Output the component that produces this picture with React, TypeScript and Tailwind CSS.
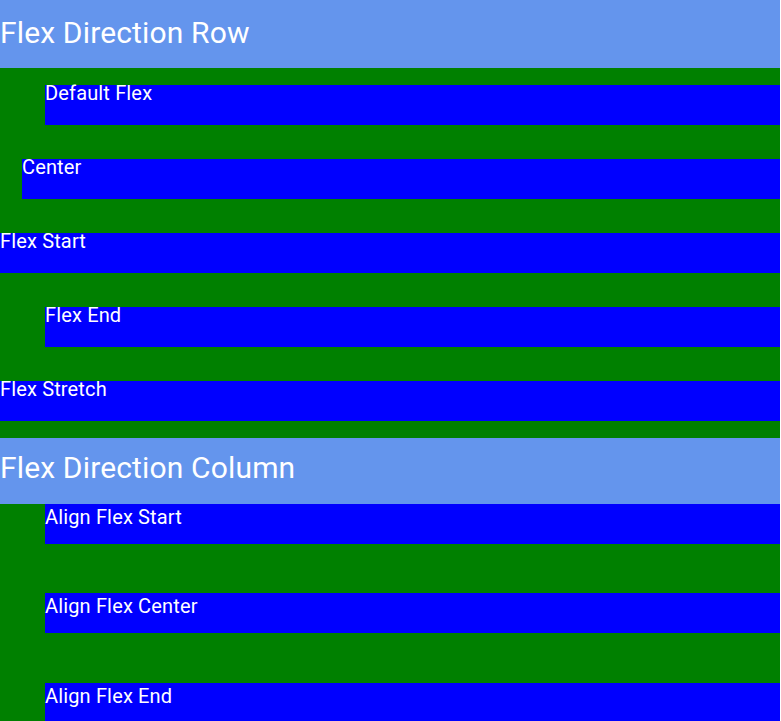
const rowItems = [
  { label: "Default Flex", indent: "ml-[45px]" },
  { label: "Center", indent: "ml-[22px]" },
  { label: "Flex Start", indent: "ml-0" },
  { label: "Flex End", indent: "ml-[45px]" },
  { label: "Flex Stretch", indent: "ml-0" },
];

const columnItems = [
  { label: "Align Flex Start", gap: "mt-0" },
  { label: "Align Flex Center", gap: "mt-[49px]" },
  { label: "Align Flex End", gap: "mt-[50px]" },
];

const Header = ({ title, box }: { title: string; box: string }) => (
  <div
    className={`flex items-center bg-[#6495ED] text-[30px] tracking-[0.15px] text-white ${box}`}
  >
    {title}
  </div>
);

export default function App() {
  return (
    <div
      className="h-[721px] w-[780px] overflow-hidden bg-[#008000]"
      style={{ fontFamily: "Roboto, 'Noto Sans', sans-serif" }}
    >
      <Header title="Flex Direction Row" box="h-[68px] pb-[4px]" />

      <div className="flex flex-col">
        {rowItems.map((item) => (
          <div
            key={item.label}
            className={`my-[17px] h-[40px] bg-[#0000FF] text-[20px] leading-[17px] tracking-[0.15px] text-white ${item.indent}`}
          >
            {item.label}
          </div>
        ))}
      </div>

      <Header title="Flex Direction Column" box="h-[66px] pb-[7px]" />

      <div className="flex flex-col">
        {columnItems.map((item) => (
          <div
            key={item.label}
            className={`ml-[45px] h-[40px] bg-[#0000FF] text-[20px] leading-[27px] tracking-[0.15px] text-white ${item.gap}`}
          >
            {item.label}
          </div>
        ))}
      </div>
    </div>
  );
}
